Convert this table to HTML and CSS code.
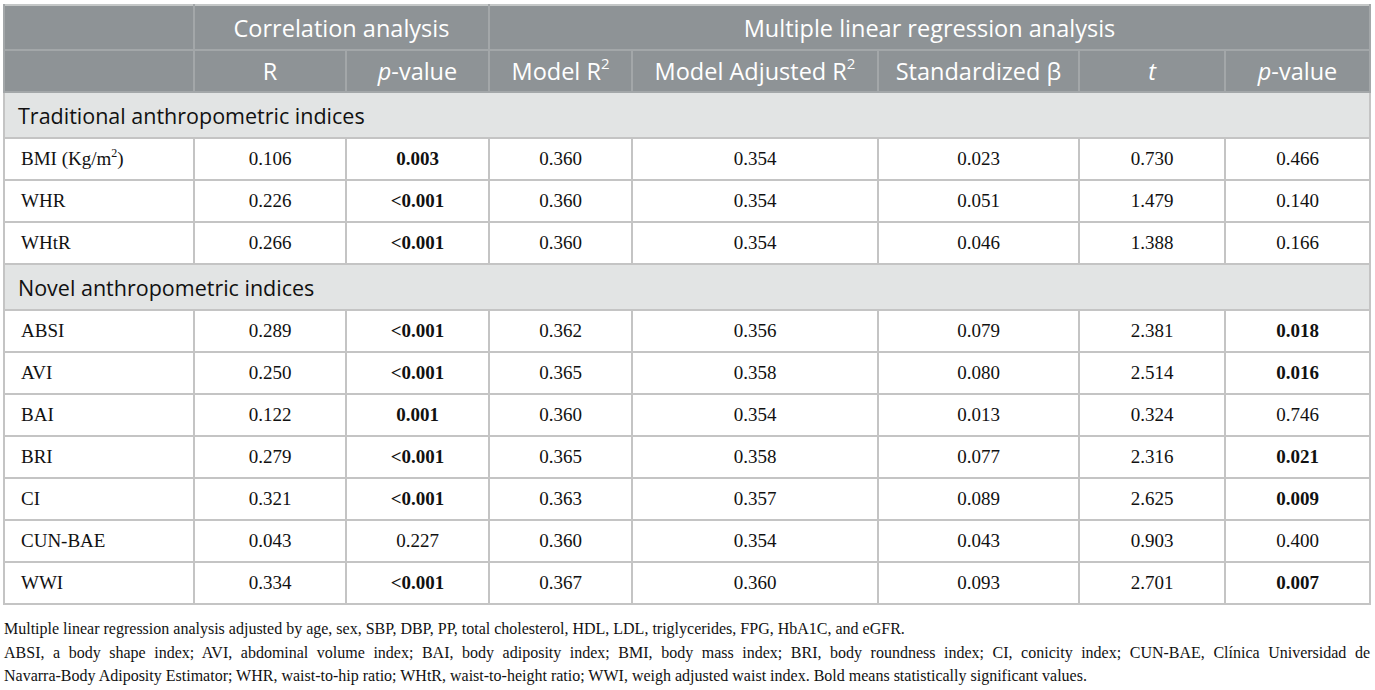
FILE: index.html
```html
<!DOCTYPE html>
<html>
<head>
<meta charset="utf-8">
<link rel="stylesheet" href="styles.css">
</head>
<body>
<div class="wrap">
<table class="data">
<colgroup>
<col style="width:190px"><col style="width:152px"><col style="width:143px"><col style="width:143px"><col style="width:246px"><col style="width:201px"><col style="width:146px"><col style="width:145px">
</colgroup>
<thead>
<tr class="h1"><th></th><th colspan="2">Correlation analysis</th><th colspan="5">Multiple linear regression analysis</th></tr>
<tr class="h2"><th></th><th>R</th><th><i>p</i>-value</th><th>Model R<sup>2</sup></th><th>Model Adjusted R<sup>2</sup></th><th>Standardized β</th><th><i>t</i></th><th><i>p</i>-value</th></tr>
</thead>
<tbody>
<tr class="sec"><td colspan="8">Traditional anthropometric indices</td></tr>
<tr><td>BMI (Kg/m<sup>2</sup>)</td><td>0.106</td><td><b>0.003</b></td><td>0.360</td><td>0.354</td><td>0.023</td><td>0.730</td><td>0.466</td></tr>
<tr><td>WHR</td><td>0.226</td><td><b>&lt;0.001</b></td><td>0.360</td><td>0.354</td><td>0.051</td><td>1.479</td><td>0.140</td></tr>
<tr><td>WHtR</td><td>0.266</td><td><b>&lt;0.001</b></td><td>0.360</td><td>0.354</td><td>0.046</td><td>1.388</td><td>0.166</td></tr>
<tr class="sec"><td colspan="8">Novel anthropometric indices</td></tr>
<tr><td>ABSI</td><td>0.289</td><td><b>&lt;0.001</b></td><td>0.362</td><td>0.356</td><td>0.079</td><td>2.381</td><td><b>0.018</b></td></tr>
<tr><td>AVI</td><td>0.250</td><td><b>&lt;0.001</b></td><td>0.365</td><td>0.358</td><td>0.080</td><td>2.514</td><td><b>0.016</b></td></tr>
<tr><td>BAI</td><td>0.122</td><td><b>0.001</b></td><td>0.360</td><td>0.354</td><td>0.013</td><td>0.324</td><td>0.746</td></tr>
<tr><td>BRI</td><td>0.279</td><td><b>&lt;0.001</b></td><td>0.365</td><td>0.358</td><td>0.077</td><td>2.316</td><td><b>0.021</b></td></tr>
<tr><td>CI</td><td>0.321</td><td><b>&lt;0.001</b></td><td>0.363</td><td>0.357</td><td>0.089</td><td>2.625</td><td><b>0.009</b></td></tr>
<tr><td>CUN-BAE</td><td>0.043</td><td>0.227</td><td>0.360</td><td>0.354</td><td>0.043</td><td>0.903</td><td>0.400</td></tr>
<tr><td>WWI</td><td>0.334</td><td><b>&lt;0.001</b></td><td>0.367</td><td>0.360</td><td>0.093</td><td>2.701</td><td><b>0.007</b></td></tr>
</tbody>
</table>
<div class="notes">
<p>Multiple linear regression analysis adjusted by age, sex, SBP, DBP, PP, total cholesterol, HDL, LDL, triglycerides, FPG, HbA1C, and eGFR.</p>
<p><span class="jline">ABSI, a body shape index; AVI, abdominal volume index; BAI, body adiposity index; BMI, body mass index; BRI, body roundness index; CI, conicity index; CUN-BAE, Clínica Universidad de</span> <span class="rest">Navarra-Body Adiposity Estimator; WHR, waist-to-hip ratio; WHtR, waist-to-height ratio; WWI, weigh adjusted waist index. Bold means statistically significant values.</span></p>
</div>
</div>
</body>
</html>
```

FILE: styles.css
```css
html, body {
  margin: 0;
  padding: 0;
  background: #ffffff;
}
.wrap {
  padding: 4px 5px 0 3px;
}
.data {
  width: 1367px;
  border-collapse: collapse;
  table-layout: fixed;
  border: 2px solid #c4c7c7;
}
.data th {
  background: #8e9396;
  color: #ffffff;
  font-family: "Open Sans", "Liberation Sans", sans-serif;
  font-weight: 400;
  font-size: 23.5px;
  text-align: center;
  padding: 0;
  border: 2px solid #a3a7a9;
}
.data th sup {
  font-size: 15px;
  vertical-align: 11px;
  line-height: 0;
}
.h1 th {
  height: 43px;
  border-top: none;
}
.h2 th {
  height: 40px;
}
.data td {
  font-family: "Liberation Serif", "Times New Roman", serif;
  font-size: 19px;
  color: #111;
  text-align: center;
  border: 2px solid #c4c4c4;
  height: 40px;
  padding: 0;
}
.data td:first-child {
  text-align: left;
  padding-left: 16px;
}
.data td sup {
  font-size: 12px;
  vertical-align: 8px;
  line-height: 0;
}
.data b {
  font-weight: 700;
}
.sec td {
  background: #e2e4e4;
  font-family: "Open Sans", "Liberation Sans", sans-serif;
  font-size: 21.5px;
  color: #111;
  height: 44px;
}
.data tr.sec td:first-child {
  padding-left: 13px;
}
.notes {
  width: 1366px;
  font-family: "Liberation Serif", "Times New Roman", serif;
  font-size: 16px;
  line-height: 23.5px;
  color: #111;
  padding: 12px 0 0 1px;
}
.notes p {
  margin: 0;
}
.jline {
  display: block;
  text-align: justify;
  text-align-last: justify;
}
.rest {
  display: block;
}
```
